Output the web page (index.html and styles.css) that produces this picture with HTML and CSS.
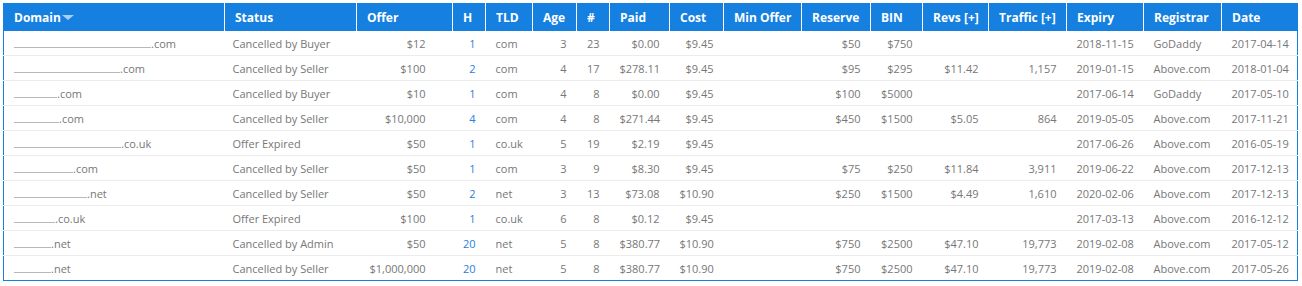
FILE: index.html
```html
<!DOCTYPE html>
<html>
<head>
<meta charset="utf-8">
<link rel="stylesheet" href="styles.css">
</head>
<body>
<table class="grid">
  <colgroup>
    <col class="c-domain"><col class="c-status"><col class="c-offer"><col class="c-h"><col class="c-tld"><col class="c-age"><col class="c-num"><col class="c-paid"><col class="c-cost"><col class="c-min"><col class="c-res"><col class="c-bin"><col class="c-revs"><col class="c-traffic"><col class="c-exp"><col class="c-reg"><col class="c-date">
  </colgroup>
  <thead>
    <tr>
      <th>Domain<span class="sort"></span></th>
      <th>Status</th>
      <th>Offer</th>
      <th>H</th>
      <th>TLD</th>
      <th>Age</th>
      <th>#</th>
      <th>Paid</th>
      <th>Cost</th>
      <th>Min Offer</th>
      <th>Reserve</th>
      <th>BIN</th>
      <th>Revs [+]</th>
      <th>Traffic [+]</th>
      <th>Expiry</th>
      <th>Registrar</th>
      <th>Date</th>
    </tr>
  </thead>
  <tbody>
    <tr>
      <td><span class="mask" style="width:137px"></span>.com</td>
      <td class="st">Cancelled by Buyer</td><td class="offer">$12</td><td class="r"><a class="h">1</a></td><td>com</td><td class="r">3</td><td class="r">23</td><td class="r">$0.00</td><td class="r">$9.45</td><td></td><td class="r">$50</td><td class="r">$750</td><td class="r"></td><td class="r"></td><td>2018-11-15</td><td>GoDaddy</td><td>2017-04-14</td>
    </tr>
    <tr>
      <td><span class="mask" style="width:106px"></span>.com</td>
      <td class="st">Cancelled by Seller</td><td class="offer">$100</td><td class="r"><a class="h">2</a></td><td>com</td><td class="r">4</td><td class="r">17</td><td class="r">$278.11</td><td class="r">$9.45</td><td></td><td class="r">$95</td><td class="r">$295</td><td class="r">$11.42</td><td class="r">1,157</td><td>2019-01-15</td><td>Above.com</td><td>2018-01-04</td>
    </tr>
    <tr>
      <td><span class="mask" style="width:43px"></span>.com</td>
      <td class="st">Cancelled by Buyer</td><td class="offer">$10</td><td class="r"><a class="h">1</a></td><td>com</td><td class="r">4</td><td class="r">8</td><td class="r">$0.00</td><td class="r">$9.45</td><td></td><td class="r">$100</td><td class="r">$5000</td><td class="r"></td><td class="r"></td><td>2017-06-14</td><td>GoDaddy</td><td>2017-05-10</td>
    </tr>
    <tr>
      <td><span class="mask" style="width:45px"></span>.com</td>
      <td class="st">Cancelled by Seller</td><td class="offer">$10,000</td><td class="r"><a class="h">4</a></td><td>com</td><td class="r">4</td><td class="r">8</td><td class="r">$271.44</td><td class="r">$9.45</td><td></td><td class="r">$450</td><td class="r">$1500</td><td class="r">$5.05</td><td class="r">864</td><td>2019-05-05</td><td>Above.com</td><td>2017-11-21</td>
    </tr>
    <tr>
      <td><span class="mask" style="width:107px"></span>.co.uk</td>
      <td class="st">Offer Expired</td><td class="offer">$50</td><td class="r"><a class="h">1</a></td><td>co.uk</td><td class="r">5</td><td class="r">19</td><td class="r">$2.19</td><td class="r">$9.45</td><td></td><td class="r"></td><td class="r"></td><td class="r"></td><td class="r"></td><td>2017-06-26</td><td>Above.com</td><td>2016-05-19</td>
    </tr>
    <tr>
      <td><span class="mask" style="width:59px"></span>.com</td>
      <td class="st">Cancelled by Seller</td><td class="offer">$50</td><td class="r"><a class="h">1</a></td><td>com</td><td class="r">3</td><td class="r">9</td><td class="r">$8.30</td><td class="r">$9.45</td><td></td><td class="r">$75</td><td class="r">$250</td><td class="r">$11.84</td><td class="r">3,911</td><td>2019-06-22</td><td>Above.com</td><td>2017-12-13</td>
    </tr>
    <tr>
      <td><span class="mask" style="width:73px"></span>.net</td>
      <td class="st">Cancelled by Seller</td><td class="offer">$50</td><td class="r"><a class="h">2</a></td><td>net</td><td class="r">3</td><td class="r">13</td><td class="r">$73.08</td><td class="r">$10.90</td><td></td><td class="r">$250</td><td class="r">$1500</td><td class="r">$4.49</td><td class="r">1,610</td><td>2020-02-06</td><td>Above.com</td><td>2017-12-13</td>
    </tr>
    <tr>
      <td><span class="mask" style="width:41px"></span>.co.uk</td>
      <td class="st">Offer Expired</td><td class="offer">$100</td><td class="r"><a class="h">1</a></td><td>co.uk</td><td class="r">6</td><td class="r">8</td><td class="r">$0.12</td><td class="r">$9.45</td><td></td><td class="r"></td><td class="r"></td><td class="r"></td><td class="r"></td><td>2017-03-13</td><td>Above.com</td><td>2016-12-12</td>
    </tr>
    <tr>
      <td><span class="mask" style="width:37px"></span>.net</td>
      <td class="st">Cancelled by Admin</td><td class="offer">$50</td><td class="r"><a class="h">20</a></td><td>net</td><td class="r">5</td><td class="r">8</td><td class="r">$380.77</td><td class="r">$10.90</td><td></td><td class="r">$750</td><td class="r">$2500</td><td class="r">$47.10</td><td class="r">19,773</td><td>2019-02-08</td><td>Above.com</td><td>2017-05-12</td>
    </tr>
    <tr>
      <td><span class="mask" style="width:37px"></span>.net</td>
      <td class="st">Cancelled by Seller</td><td class="offer">$1,000,000</td><td class="r"><a class="h">20</a></td><td>net</td><td class="r">5</td><td class="r">8</td><td class="r">$380.77</td><td class="r">$10.90</td><td></td><td class="r">$750</td><td class="r">$2500</td><td class="r">$47.10</td><td class="r">19,773</td><td>2019-02-08</td><td>Above.com</td><td>2017-05-26</td>
    </tr>
  </tbody>
</table>
</body>
</html>
```

FILE: styles.css
```css
html, body {
  margin: 0;
  padding: 0;
  background: #ffffff;
}
body {
  padding: 3px 0 0 3px;
  font-family: "Open Sans", "DejaVu Sans", sans-serif;
}
.grid {
  width: 1294px;
  table-layout: fixed;
  border-collapse: collapse;
  border: 1px solid #1680e0;
}
.c-domain { width: 221px; }
.c-status { width: 132px; }
.c-offer { width: 96px; }
.c-h { width: 33px; }
.c-tld { width: 47px; }
.c-age { width: 44px; }
.c-num { width: 33px; }
.c-paid { width: 60px; }
.c-cost { width: 54px; }
.c-min { width: 78px; }
.c-res { width: 69px; }
.c-bin { width: 52px; }
.c-revs { width: 66px; }
.c-traffic { width: 78px; }
.c-exp { width: 77px; }
.c-reg { width: 78px; }
.c-date { width: 76px; }

.grid th {
  background: #1680e0;
  color: #ffffff;
  font-weight: 700;
  font-size: 12px;
  text-align: left;
  height: 27px;
  padding: 0 10px;
  border-left: 1px solid #ffffff;
  white-space: nowrap;
  overflow: hidden;
}
.grid th:first-child {
  border-left: none;
}
.sort {
  display: inline-block;
  width: 0;
  height: 0;
  border-left: 6.5px solid transparent;
  border-right: 6.5px solid transparent;
  border-top: 5px solid #a9cff3;
  margin-left: 1px;
  vertical-align: 2px;
}
.grid td {
  font-size: 11px;
  color: #777777;
  height: 24px;
  padding: 0 10px;
  border-bottom: 1px solid #ececec;
  white-space: nowrap;
  overflow: hidden;
}
.grid tbody tr:last-child td {
  border-bottom: none;
}
.grid td.st {
  padding-left: 8px;
}
.grid td.r {
  text-align: right;
}
.grid td.offer {
  text-align: right;
  padding-right: 27px;
}
.h {
  color: #2a7de1;
  text-decoration: none;
}
.mask {
  display: inline-block;
  height: 0;
  border-bottom: 1px solid #b8b8b8;
  vertical-align: 0;
}
```
